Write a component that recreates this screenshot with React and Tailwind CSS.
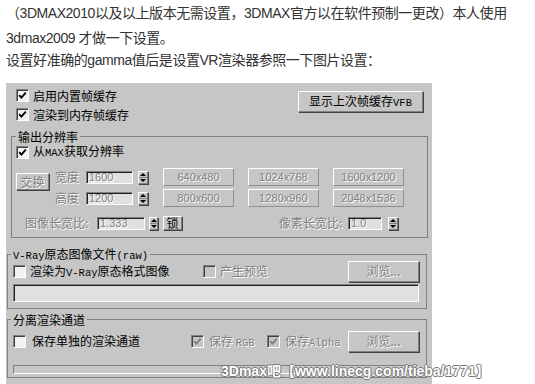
import React from "react";

const D = "text-[#808080] [text-shadow:1px_1px_0_#ffffff]";
const RAISED =
  "border border-t-white border-l-white border-r-[#808080] border-b-[#808080] shadow-[1px_1px_0_#404040] bg-[#c6c6c6]";
const SUNKEN =
  "border border-t-[#808080] border-l-[#808080] border-r-white border-b-white shadow-[inset_1px_1px_0_#202020] bg-[#e0e0e0]";

function M({ children }) {
  return <span className="font-['Liberation_Mono',monospace] text-[10.5px] leading-none">{children}</span>;
}

function CB({ checked, disabled }) {
  return (
    <span
      className={`w-[13px] h-[13px] shrink-0 border border-t-[#808080] border-l-[#808080] border-r-white border-b-white shadow-[inset_1px_1px_0_#404040] flex items-center justify-center ${
        disabled ? "bg-[#c6c6c6]" : "bg-[#f2f2f2]"
      }`}
    >
      {checked && (
        <svg width="9" height="9" viewBox="0 0 9 9">
          <polyline
            points="1.2,4.2 3.4,6.6 7.8,1.6"
            fill="none"
            stroke={disabled ? "#808080" : "#000"}
            strokeWidth="1.9"
          />
        </svg>
      )}
    </span>
  );
}

function Spin({ w = "w-[10px]" }) {
  return (
    <div className={`${w} h-[13px] shrink-0 flex flex-col ${RAISED}`}>
      <div className="flex-1 flex items-center justify-center">
        <div className="w-0 h-0 border-l-[3px] border-r-[3px] border-b-[3px] border-l-transparent border-r-transparent border-b-black" />
      </div>
      <div className="h-px bg-[#808080]" />
      <div className="flex-1 flex items-center justify-center">
        <div className="w-0 h-0 border-l-[3px] border-r-[3px] border-t-[3px] border-l-transparent border-r-transparent border-t-black" />
      </div>
    </div>
  );
}

function Num({ children, w }) {
  return (
    <div className={`${w} h-[13px] shrink-0 flex items-center pl-[2px] ${SUNKEN}`}>
      <span className={`font-['Liberation_Sans',sans-serif] text-[11px] leading-[11px] ${D}`}>{children}</span>
    </div>
  );
}

function Res({ children }) {
  return (
    <div className={`w-[71px] h-[18px] shrink-0 flex items-center justify-center ${RAISED} shadow-none border-r-[#909090] border-b-[#909090]`}>
      <span className={`font-['Liberation_Sans',sans-serif] text-[11px] ${D}`}>{children}</span>
    </div>
  );
}

export default function App() {
  return (
    <div className="relative w-[535px] h-[384px] overflow-hidden bg-white">
      <div className="pl-[6px] pt-[1px] text-[14px] text-[#333] tracking-[-0.45px] font-['Liberation_Sans','Noto_Sans_CJK_SC',sans-serif] whitespace-nowrap">
        <p className="leading-[25px]">（3DMAX2010以及以上版本无需设置，3DMAX官方以在软件预制一更改）本人使用</p>
        <p className="leading-[25px]">3dmax2009 才做一下设置。</p>
        <p className="leading-[18px]">设置好准确的gamma值后是设置VR渲染器参照一下图片设置：</p>
      </div>

      <div className="ml-[6px] mt-[14px] w-[426px] h-[310px] bg-[#c6c6c6] text-[12px] leading-[14px] text-black font-['Noto_Sans_CJK_SC',sans-serif]">
        {/* top section */}
        <div className="pt-[3px] flex justify-between pr-[9px]">
          <div className="pl-[10px]">
            <div className="h-[19px] flex items-center gap-[4px]">
              <CB checked />
              <span>启用内置帧缓存</span>
            </div>
            <div className="h-[19px] flex items-center gap-[4px]">
              <CB checked />
              <span>渲染到内存帧缓存</span>
            </div>
          </div>
          <div className={`mt-[5px] h-[21px] w-[125px] flex items-center justify-center ${RAISED}`}>
            <span>
              显示上次帧缓存<M>VFB</M>
            </span>
          </div>
        </div>

        {/* 输出分辨率 */}
        <fieldset className="ml-[5px] mt-[6px] w-[417px] border border-[#808080] pb-[7px]">
          <legend className="ml-[4px] px-[2px] leading-[13px]">输出分辨率</legend>
          <div className="mt-[2px] h-[14px] pl-[4px] flex items-center gap-[4px]">
            <CB checked />
            <span className="leading-[12px]">
              从<M>MAX</M>获取分辨率
            </span>
          </div>

          <div className="mt-[9px] pl-[4px] flex items-start">
            <div className={`mt-[5px] w-[33px] h-[17px] flex items-center justify-center ${RAISED} ${D}`}>交换</div>
            <div className="ml-[6px] flex flex-col gap-[3px]">
              {[
                ["宽度", "1600", ["640x480", "1024x768", "1600x1200"]],
                ["高度", "1200", ["800x600", "1280x960", "2048x1536"]],
              ].map(([lab, val, res]) => (
                <div key={lab} className="h-[18px] flex items-center">
                  <span className={`w-[24px] ${D}`}>{lab}</span>
                  <div className="ml-[7px]">
                    <Num w="w-[47px]">{val}</Num>
                  </div>
                  <div className="ml-[5px]">
                    <Spin />
                  </div>
                  <div className="ml-[15px] flex gap-[14px]">
                    {res.map((r) => (
                      <Res key={r}>{r}</Res>
                    ))}
                  </div>
                </div>
              ))}
            </div>
          </div>

          <div className="mt-[9px] h-[14px] flex items-center pl-[13px]">
            <span className={`w-[66px] shrink-0 whitespace-nowrap ${D}`}>图像长宽比:</span>
            <div className="ml-[6px]">
              <Num w="w-[48px]">1.333</Num>
            </div>
            <div className="ml-[4px]">
              <Spin w="w-[9px]" />
            </div>
            <div className={`ml-[5px] w-[19px] h-[14px] flex items-center justify-center ${RAISED}`}>锁</div>
            <span className={`ml-[97px] w-[67px] shrink-0 whitespace-nowrap ${D}`}>像素长宽比:</span>
            <div className="ml-[2px]">
              <Num w="w-[34px]">1.0</Num>
            </div>
            <div className="ml-[6px]">
              <Spin />
            </div>
          </div>
        </fieldset>

        {/* V-Ray raw */}
        <fieldset className="ml-[1px] mt-[9px] w-[420px] border border-[#808080] pb-[6px]">
          <legend className="ml-[3px] px-[2px] leading-[14px]">
            <M>V-Ray</M>原态图像文件<M>(raw)</M>
          </legend>
          <div className="mt-[-1px] h-[21px] pl-[5px] pr-[7px] flex items-center">
            <div className="w-[190px] flex items-center gap-[4px]">
              <CB />
              <span>
                渲染为<M>V-Ray</M>原态格式图像
              </span>
            </div>
            <div className="flex-1 flex items-center gap-[4px]">
              <CB disabled />
              <span className={D}>产生预览</span>
            </div>
            <div className={`w-[71px] h-[21px] flex items-center justify-center ${RAISED} ${D}`}>浏览...</div>
          </div>
          <div className={`ml-[5px] mt-[2px] w-[406px] h-[18px] ${SUNKEN}`} />
        </fieldset>

        {/* 分离渲染通道 */}
        <fieldset className="ml-[1px] mt-[4px] w-[420px] border border-[#808080] pb-[3px]">
          <legend className="ml-[3px] px-[2px] leading-[14px]">分离渲染通道</legend>
          <div className="mt-[4px] h-[21px] pl-[5px] pr-[7px] flex items-center">
            <div className="w-[178px] flex items-center gap-[6px]">
              <CB />
              <span>保存单独的渲染通道</span>
            </div>
            <div className="w-[76px] flex items-center gap-[5px]">
              <CB checked disabled />
              <span className={D}>
                保存 <M>RGB</M>
              </span>
            </div>
            <div className="flex-1 flex items-center gap-[5px]">
              <CB checked disabled />
              <span className={D}>
                保存<M>Alpha</M>
              </span>
            </div>
            <div className={`w-[71px] h-[21px] flex items-center justify-center ${RAISED} ${D}`}>浏览...</div>
          </div>
          <div className="ml-[5px] mt-[13px] w-[406px] h-[9px] border border-t-[#808080] border-l-[#808080] border-r-white border-b-white bg-[#c6c6c6]" />
        </fieldset>
      </div>

      <div className="absolute left-[221px] top-[362px] whitespace-nowrap text-[14px] leading-[18px] font-bold text-white font-['Liberation_Sans','Noto_Sans_CJK_SC',sans-serif] [text-shadow:1px_0_0_#777,-1px_0_0_#777,0_1px_0_#777,0_-1px_0_#777]">
        3Dmax吧【www.linecg.com/tieba/1771】
      </div>
    </div>
  );
}
